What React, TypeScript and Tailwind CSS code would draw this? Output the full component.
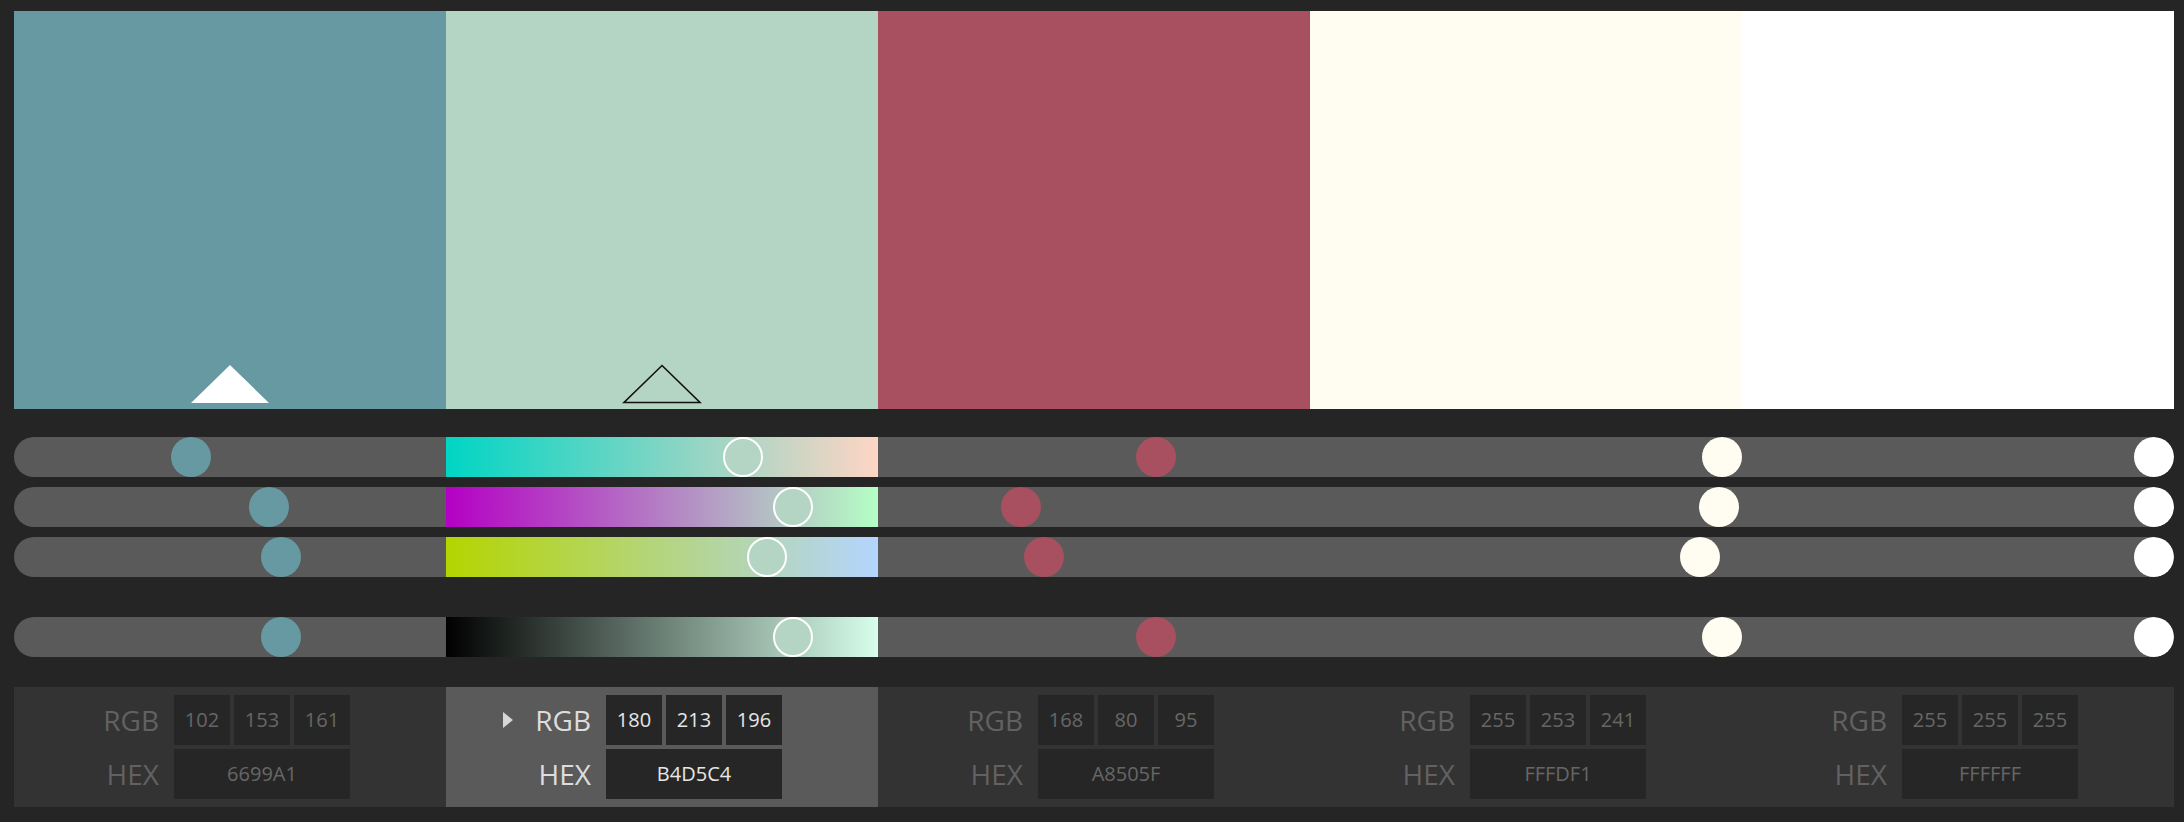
import React from "react";

type Swatch = { hex: string; rgb: [number, number, number] };

const swatches: Swatch[] = [
  { hex: "6699A1", rgb: [102, 153, 161] },
  { hex: "B4D5C4", rgb: [180, 213, 196] },
  { hex: "A8505F", rgb: [168, 80, 95] },
  { hex: "FFFDF1", rgb: [255, 253, 241] },
  { hex: "FFFFFF", rgb: [255, 255, 255] },
];

const ACTIVE = 1;
const BASE = 0; // marker (filled triangle) swatch

const css = (r: number, g: number, b: number) => `rgb(${r}, ${g}, ${b})`;

// gradient backgrounds for the active column
function gradientFor(row: number, [r, g, b]: [number, number, number]) {
  if (row === 0) return `linear-gradient(to right, ${css(0, g, b)}, ${css(255, g, b)})`;
  if (row === 1) return `linear-gradient(to right, ${css(r, 0, b)}, ${css(r, 255, b)})`;
  if (row === 2) return `linear-gradient(to right, ${css(r, g, 0)}, ${css(r, g, 255)})`;
  const m = Math.max(r, g, b) || 1;
  const k = 255 / m;
  return `linear-gradient(to right, #000, ${css(Math.round(r * k), Math.round(g * k), Math.round(b * k))})`;
}

function valueFor(row: number, rgb: [number, number, number]) {
  return row === 3 ? Math.max(...rgb) : rgb[row];
}

function Triangle({ filled }: { filled: boolean }) {
  return (
    <svg width="80" height="40" viewBox="0 0 80 40">
      {filled ? (
        <polygon points="40,1 79,39 1,39" fill="#ffffff" />
      ) : (
        <polygon points="40,1.5 78,38.5 2,38.5" fill="none" stroke="#111" strokeWidth="1.6" />
      )}
    </svg>
  );
}

function SliderRow({ row }: { row: number }) {
  return (
    <div className="flex h-[40px] w-full rounded-full overflow-hidden bg-[#5a5a5a]">
      {swatches.map((s, i) => {
        const v = valueFor(row, s.rgb);
        const left = (v / 255) * 392;
        const active = i === ACTIVE;
        return (
          <div
            key={i}
            className="relative h-full w-[432px] shrink-0"
            style={active ? { background: gradientFor(row, s.rgb) } : undefined}
          >
            <div
              className={
                active
                  ? "absolute top-0 h-[40px] w-[40px] rounded-full border-2 border-white"
                  : "absolute top-0 h-[40px] w-[40px] rounded-full"
              }
              style={{ left, background: `#${s.hex}` }}
            />
          </div>
        );
      })}
    </div>
  );
}

function Box({ children, active, wide }: { children: React.ReactNode; active: boolean; wide?: boolean }) {
  return (
    <div
      className={`flex h-[50px] items-center justify-center bg-[#262626] text-[20px] ${
        wide ? "w-[176px]" : "w-[56px]"
      } ${active ? "text-[#e6e6e6]" : "text-[#666666]"}`}
    >
      {children}
    </div>
  );
}

function InfoColumn({ s, active }: { s: Swatch; active: boolean }) {
  const label = active ? "text-[#dddddd]" : "text-[#616161]";
  return (
    <div className={`w-[432px] shrink-0 py-[8px] ${active ? "bg-[#5a5a5a]" : "bg-[#333333]"}`}>
      <div className="grid grid-cols-[145px_176px] gap-x-[15px] gap-y-[4px]">
        <div className="flex items-center justify-end gap-[22px]">
          {active && (
            <svg width="10" height="16" viewBox="0 0 10 16">
              <polygon points="0,0 10,8 0,16" fill="#d6d6d6" />
            </svg>
          )}
          <span className={`text-[28px] leading-none ${label}`}>RGB</span>
        </div>
        <div className="flex gap-[4px]">
          {s.rgb.map((v, i) => (
            <Box key={i} active={active}>
              {v}
            </Box>
          ))}
        </div>
        <div className="flex items-center justify-end">
          <span className={`text-[28px] leading-none ${label}`}>HEX</span>
        </div>
        <Box active={active} wide>
          {s.hex}
        </Box>
      </div>
    </div>
  );
}

export default function App() {
  return (
    <div
      className="w-[2184px] h-[822px] bg-[#252525] pt-[11px] pl-[14px] overflow-hidden"
      style={{ fontFamily: '"Open Sans", "Liberation Sans", sans-serif' }}
    >
      <div className="w-[2160px] flex flex-col">
        <div className="flex h-[398px]">
          {swatches.map((s, i) => (
            <div
              key={i}
              className="w-[432px] shrink-0 flex items-end justify-center pb-[5px]"
              style={{ background: `#${s.hex}` }}
            >
              {i === BASE && <Triangle filled />}
              {i === ACTIVE && <Triangle filled={false} />}
            </div>
          ))}
        </div>

        <div className="mt-[28px] flex flex-col gap-[10px]">
          <SliderRow row={0} />
          <SliderRow row={1} />
          <SliderRow row={2} />
        </div>
        <div className="mt-[40px]">
          <SliderRow row={3} />
        </div>

        <div className="mt-[30px] flex">
          {swatches.map((s, i) => (
            <InfoColumn key={i} s={s} active={i === ACTIVE} />
          ))}
        </div>
      </div>
    </div>
  );
}
